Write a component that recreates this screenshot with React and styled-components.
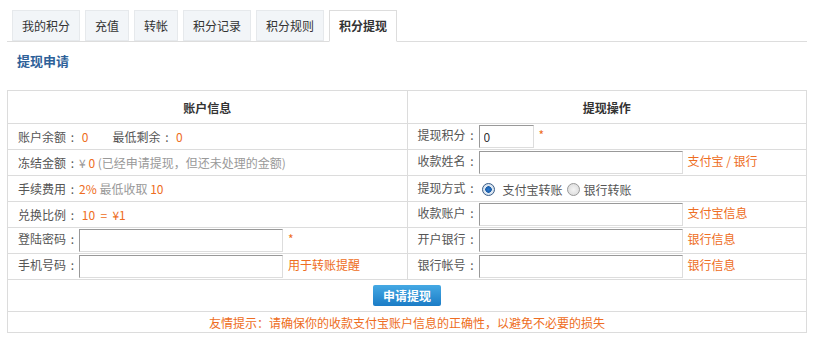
import React from 'react';
import styled, { createGlobalStyle } from 'styled-components';

const GlobalStyle = createGlobalStyle`
    body{
        margin:0;
        background:#fff;
        font-family:"Noto Sans CJK SC", "Noto Sans", Arial, sans-serif;
        font-size:12px;
        color:#555;
    }
`

const Wrapper = styled.div`
    width:800px;
    margin-left:7px;
    padding-top:10px;
`

const TabBar = styled.ul`
    display:flex;
    gap:5px;
    list-style:none;
    margin:0;
    padding:0 0 0 5px;
    border-bottom:1px solid #ddd;
    height:31px;
`

const Tab = styled.li`
    box-sizing:border-box;
    padding:0 9px;
    line-height:29px;
    border:1px solid ${({ active }) => (active ? '#ddd' : '#e6e9ec')};
    border-bottom:${({ active }) => (active ? '1px solid #fff' : '1px solid #e6e9ec')};
    background:${({ active }) => (active ? '#fff' : '#f2f5f8')};
    color:#333;
    font-weight:${({ active }) => (active ? 'bold' : 'normal')};
    margin-bottom:${({ active }) => (active ? '-1px' : '0')};
    height:${({ active }) => (active ? '32px' : '31px')};
`

const Heading = styled.h3`
    margin:0;
    padding:12px 0 0 10px;
    height:37px;
    box-sizing:border-box;
    font-size:13px;
    font-weight:bold;
    color:#2e6199;
    line-height:14px;
`

const Table = styled.table`
    width:800px;
    border-collapse:collapse;
    margin-top:11px;
    table-layout:fixed;

    th, td{
        border:1px solid #dcdcdc;
        padding:0 0 0 10px;
        vertical-align:middle;
        white-space:nowrap;
    }
    th{
        height:32px;
        padding:0;
        color:#333;
        font-weight:bold;
        text-align:center;
    }
    td{
        height:25px;
    }
`

const ActionCell = styled.td`
    && {
        height:31px;
        padding:0;
        text-align:center;
    }
`

const NoteCell = styled.td`
    && {
        height:20px;
        padding:0;
        text-align:center;
        color:#ee6d22;
    }
`

const Label = styled.span`
    color:#555;
`

const Colon = styled.span`
    display:inline-block;
    width:13px;
    text-align:center;
`

const Value = styled.span`
    color:#ee6d22;
    margin-right:${({ gap }) => gap || 0}px;
`

const Muted = styled.span`
    color:#999;
`

const Hint = styled.span`
    color:#ee6d22;
    margin-left:5px;
`

const Field = styled.input`
    box-sizing:border-box;
    width:${({ w }) => w || 204}px;
    height:23px;
    border:1px solid #ddd;
    border-top-color:#999;
    border-left-color:#999;
    padding:0 4px;
    font-family:inherit;
    font-size:12px;
    color:#333;
    vertical-align:middle;
    outline:none;
`

const RadioGroup = styled.span`
    display:inline-flex;
    align-items:center;
    vertical-align:middle;
`

const Radio = styled.input`
    appearance:none;
    box-sizing:border-box;
    margin:0 ${({ after }) => after || 6}px 0 ${({ before }) => before || 4}px;
    width:13px;
    height:13px;
    border-radius:50%;
    border:1px solid #9a9a9a;
    background:radial-gradient(circle, #f4f4f4 0%, #d8d8d8 100%);

    &:checked{
        border-color:#3b5d86;
        background:radial-gradient(circle, #2a7ad1 0, #1c5ea8 3px, #dfe9f4 3.5px, #c9d6e4 100%);
    }
`

const Button = styled.button`
    width:68px;
    height:21px;
    border:none;
    border-radius:2px;
    background:linear-gradient(#45a9e4, #1b7cc6);
    color:#fff;
    font-family:inherit;
    font-size:12px;
    font-weight:bold;
    padding:0;
    cursor:pointer;
`

const tabs = ['我的积分', '充值', '转帐', '积分记录', '积分规则', '积分提现']

function Name({ children }) {
    return <Label>{children}<Colon>:</Colon></Label>
}

function App() {
    return (
        <Wrapper>
            <GlobalStyle />
            <TabBar>
                {tabs.map((t, i) => (
                    <Tab key={t} active={i === tabs.length - 1}>{t}</Tab>
                ))}
            </TabBar>
            <Heading>提现申请</Heading>
            <Table>
                <thead>
                    <tr>
                        <th>账户信息</th>
                        <th>提现操作</th>
                    </tr>
                </thead>
                <tbody>
                    <tr>
                        <td><Name>账户余额</Name> <Value gap={24}>0</Value><Name>最低剩余</Name> <Value>0</Value></td>
                        <td><Name>提现积分</Name><Field w={55} defaultValue="0" /><Hint>*</Hint></td>
                    </tr>
                    <tr>
                        <td><Name>冻结金额</Name><Muted>¥</Muted> <Value>0</Value> <Muted>(已经申请提现，但还未处理的金额)</Muted></td>
                        <td><Name>收款姓名</Name><Field /><Hint>支付宝 / 银行</Hint></td>
                    </tr>
                    <tr>
                        <td><Name>手续费用</Name><Value>2%</Value> <Muted>最低收取</Muted> <Value>10</Value></td>
                        <td>
                            <Name>提现方式</Name>
                            <RadioGroup>
                                <Radio type="radio" name="way" defaultChecked before={3} after={8} />支付宝转账
                                <Radio type="radio" name="way" before={4} after={4} />银行转账
                            </RadioGroup>
                        </td>
                    </tr>
                    <tr>
                        <td><Name>兑换比例</Name> <Value>10 &nbsp;= &nbsp;¥1</Value></td>
                        <td><Name>收款账户</Name><Field /><Hint>支付宝信息</Hint></td>
                    </tr>
                    <tr>
                        <td><Name>登陆密码</Name><Field type="password" /><Hint>*</Hint></td>
                        <td><Name>开户银行</Name><Field /><Hint>银行信息</Hint></td>
                    </tr>
                    <tr>
                        <td><Name>手机号码</Name><Field /><Hint>用于转账提醒</Hint></td>
                        <td><Name>银行帐号</Name><Field /><Hint>银行信息</Hint></td>
                    </tr>
                    <tr>
                        <ActionCell colSpan={2}><Button>申请提现</Button></ActionCell>
                    </tr>
                    <tr>
                        <NoteCell colSpan={2}>友情提示：请确保你的收款支付宝账户信息的正确性，以避免不必要的损失</NoteCell>
                    </tr>
                </tbody>
            </Table>
        </Wrapper>
    )
}

export default App
